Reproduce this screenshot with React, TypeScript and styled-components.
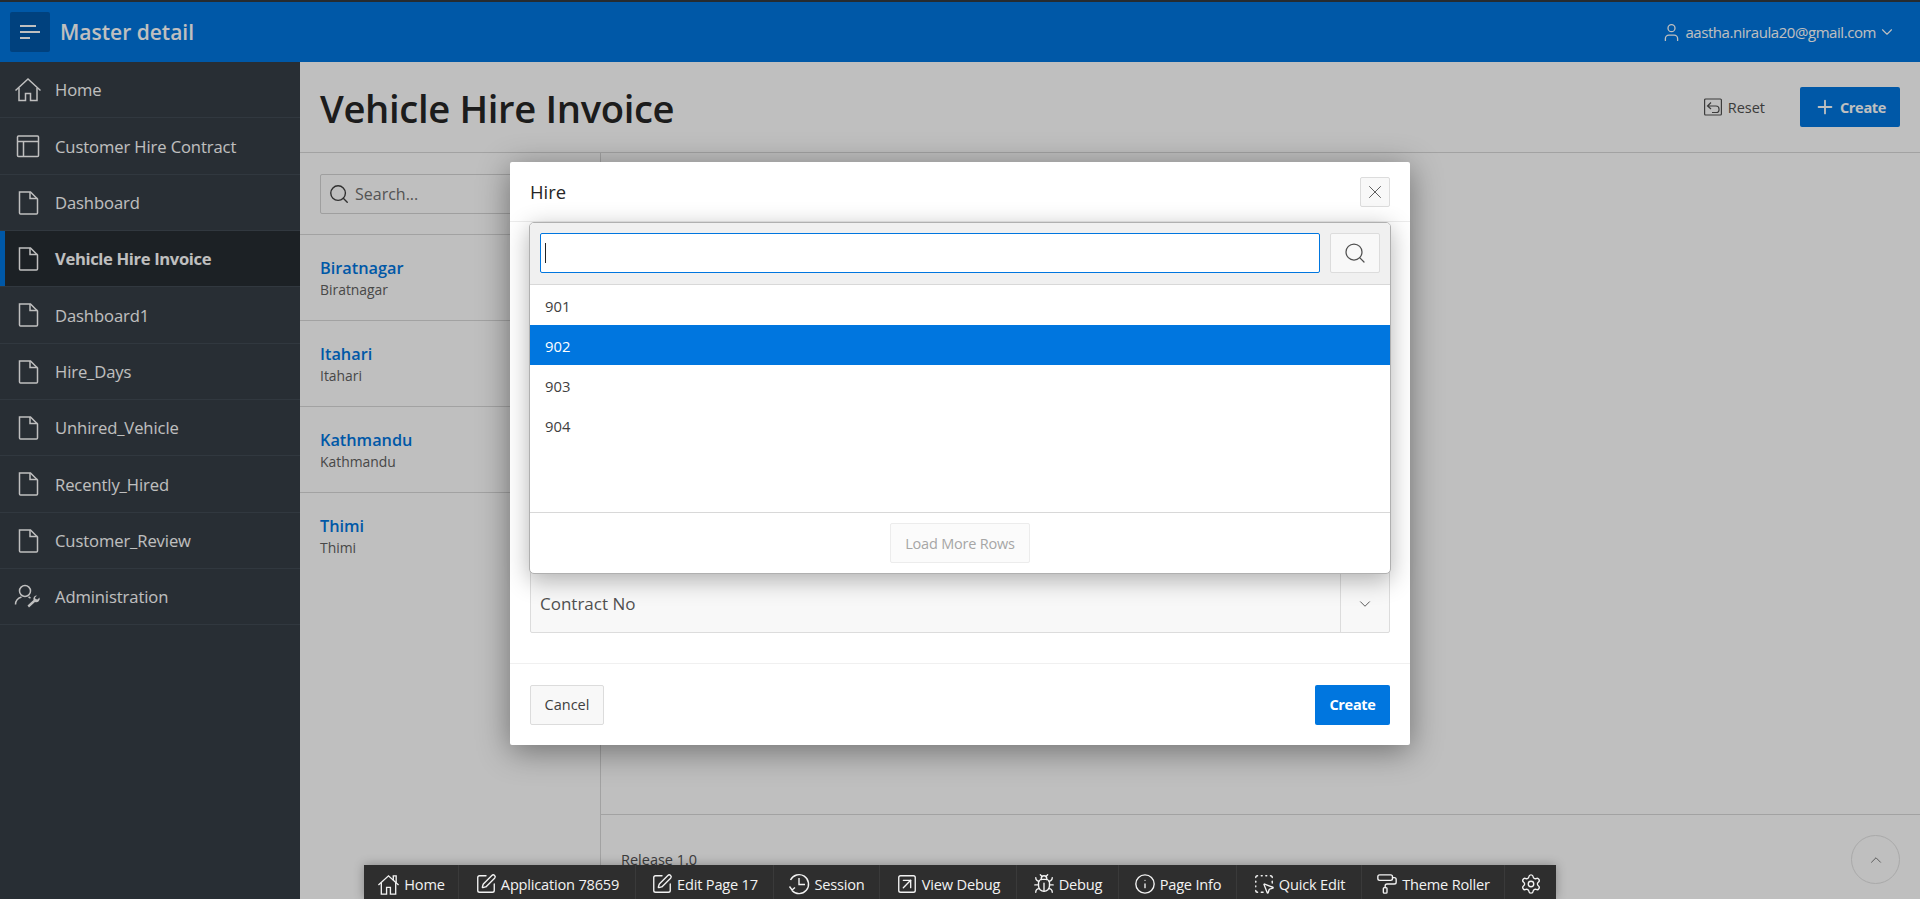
import React from 'react';
import styled, { createGlobalStyle } from 'styled-components';
import {
  ChevronDown,
  ChevronUp,
  Info,
  PaintRoller,
  Plus,
  Search,
  Settings,
  SquareArrowUpRight,
  SquareDashedMousePointer,
  SquarePen,
  User,
  Bug,
  X,
} from 'lucide-react';

const GlobalStyle = createGlobalStyle`
  html, body {
    margin: 0;
    height: 100%;
    background: #fff;
    font-family: "Open Sans", "Noto Sans", "Liberation Sans", sans-serif;
  }
  * { box-sizing: border-box; }
`;

const Page = styled.div`
  position: relative;
  height: 100vh;
  overflow: hidden;
  display: flex;
  flex-direction: column;
`;

const Header = styled.header`
  flex: 0 0 62px;
  display: flex;
  align-items: center;
  padding: 0 24px 0 10px;
  background: #0076df;
  border-top: 2px solid #333a40;
  color: #fff;
`;

const MenuButton = styled.div`
  width: 40px;
  height: 40px;
  display: flex;
  flex-direction: column;
  justify-content: center;
  gap: 4.3px;
  padding-left: 10px;
  background: #0057a9;
  border-radius: 2px;
`;

const MenuBar = styled.span<{ $w: number }>`
  display: block;
  height: 2px;
  width: ${(p) => p.$w}px;
  background: #fff;
`;

const Brand = styled.div`
  margin-left: 10px;
  font-size: 21px;
  font-weight: 600;
`;

const UserMenu = styled.div`
  margin-left: auto;
  display: flex;
  align-items: center;
  font-size: 15px;
  letter-spacing: -0.44px;
`;

const UserName = styled.span`
  margin: 0 2px 0 3px;
`;

const Body = styled.div`
  flex: 1;
  min-height: 0;
  display: flex;
`;

const Sidebar = styled.nav`
  flex: 0 0 300px;
  background: #363e46;
`;

const NavItem = styled.div<{ $active?: boolean }>`
  height: 56.33px;
  display: flex;
  align-items: center;
  padding: 0.5px 0 0 14px;
  gap: 13px;
  color: #fff;
  font-size: 16.6px;
  font-weight: ${(p) => (p.$active ? 700 : 400)};
  letter-spacing: ${(p) => (p.$active ? '-0.35px' : '-0.1px')};
  background: ${(p) => (p.$active ? '#262d32' : 'transparent')};
  border-bottom: 1px solid #424b54;
  box-shadow: ${(p) => (p.$active ? 'inset 5px 0 0 #0076df' : 'none')};
`;

const NavIconBox = styled.span`
  width: 28px;
  height: 28px;
  display: flex;
  align-items: center;
  justify-content: center;
`;

const Main = styled.main`
  flex: 1;
  min-width: 0;
  display: flex;
  flex-direction: column;
`;

const PageHead = styled.div`
  flex: 0 0 91px;
  display: flex;
  align-items: center;
  padding: 0 20px;
  border-bottom: 1px solid #d8d8d8;
`;

const PageTitle = styled.h1`
  margin: 2px 0 0;
  font-size: 38.2px;
  font-weight: 600;
  letter-spacing: -0.35px;
  color: #262626;
`;

const ResetButton = styled.div`
  margin-left: auto;
  display: flex;
  align-items: center;
  gap: 6px;
  color: #505050;
  font-size: 14.5px;
  margin-right: 35px;
`;

const PrimaryHeadButton = styled.div`
  width: 100px;
  height: 40px;
  display: flex;
  align-items: center;
  justify-content: center;
  gap: 4px;
  background: #0076df;
  color: #fff;
  border-radius: 2px;
  font-size: 14.5px;
  font-weight: 700;
  letter-spacing: -0.3px;
`;

const Split = styled.div`
  flex: 1;
  min-height: 0;
  display: flex;
`;

const MasterColumn = styled.aside`
  flex: 0 0 301px;
  border-right: 1px solid #d8d8d8;
`;

const SearchWrap = styled.div`
  height: 82px;
  padding: 21px 20px;
  border-bottom: 1px solid #d8d8d8;
`;

const SearchBox = styled.div`
  height: 40px;
  display: flex;
  align-items: center;
  gap: 5px;
  padding-left: 7px;
  border: 1px solid #d4d4d4;
  border-radius: 2px;
  color: #707070;
  font-size: 16px;
`;

const MasterItem = styled.div<{ $last?: boolean }>`
  height: 86px;
  padding: 23px 20px 0;
  border-bottom: ${(p) => (p.$last ? 'none' : '1px solid #d8d8d8')};
`;

const MasterTitle = styled.div`
  color: #0076df;
  font-size: 16.3px;
  font-weight: 600;
  line-height: 21px;
`;

const MasterSub = styled.div`
  color: #606060;
  font-size: 13.9px;
  line-height: 22px;
`;

const DetailColumn = styled.section`
  flex: 1;
  display: flex;
  flex-direction: column;
  justify-content: flex-end;
`;

const Footer = styled.footer`
  height: 85px;
  padding: 35px 20px 0;
  border-top: 1px solid #d8d8d8;
  color: #505050;
  font-size: 14.5px;
`;

const Overlay = styled.div`
  position: absolute;
  inset: 0;
  background: rgba(0, 0, 0, 0.25);
`;

const Dialog = styled.div`
  position: absolute;
  left: 510px;
  top: 162px;
  width: 900px;
  height: 583px;
  display: flex;
  flex-direction: column;
  background: #fff;
  border-radius: 2px;
  box-shadow: 0 6px 32px rgba(0, 0, 0, 0.42);
  color: #404040;
`;

const DialogHead = styled.div`
  flex: 0 0 60px;
  display: flex;
  align-items: center;
  justify-content: space-between;
  padding: 0 20px;
  border-bottom: 1px solid #ececec;
  font-size: 18.4px;
  font-weight: 500;
  color: #262626;
`;

const IconButton = styled.div<{ $w: number; $h: number }>`
  width: ${(p) => p.$w}px;
  height: ${(p) => p.$h}px;
  display: flex;
  align-items: center;
  justify-content: center;
  background: #f8f8f8;
  border: 1px solid #dcdcdc;
  border-radius: 2px;
  color: #505050;
`;

const DialogBody = styled.div`
  flex: 1;
  display: flex;
  flex-direction: column;
  justify-content: flex-end;
  padding: 0 20px 30px;
  border-bottom: 1px solid #f0f0f0;
`;

const SelectField = styled.div`
  height: 64px;
  display: flex;
  align-items: stretch;
  background: #f8f8f8;
  border: 1px solid #dcdcdc;
  border-radius: 2px;
`;

const SelectLabel = styled.div`
  flex: 1;
  display: flex;
  align-items: center;
  padding: 5px 0 0 9px;
  font-size: 17px;
  color: #505050;
`;

const SelectToggle = styled.div`
  width: 49px;
  display: flex;
  align-items: center;
  justify-content: center;
  padding-top: 5px;
  border-left: 1px solid #dcdcdc;
  color: #505050;
`;

const DialogFoot = styled.div`
  flex: 0 0 81px;
  display: flex;
  align-items: center;
  justify-content: space-between;
  padding: 0 20px;
`;

const CancelButton = styled.div`
  width: 74px;
  height: 40px;
  display: flex;
  align-items: center;
  justify-content: center;
  background: #f8f8f8;
  border: 1px solid #dcdcdc;
  border-radius: 2px;
  font-size: 14.5px;
  color: #404040;
`;

const CreateButton = styled.div`
  width: 75px;
  height: 40px;
  display: flex;
  align-items: center;
  justify-content: center;
  background: #0076df;
  border-radius: 2px;
  color: #fff;
  font-size: 14.5px;
  font-weight: 700;
  letter-spacing: -0.3px;
`;

const Popup = styled.div`
  position: absolute;
  left: 19px;
  top: 60px;
  width: 862px;
  height: 352px;
  display: flex;
  flex-direction: column;
  background: #fff;
  border-radius: 5px;
  border: 1px solid #b0b0b0;
  box-shadow: 0 6px 24px rgba(0, 0, 0, 0.3);
  overflow: hidden;
`;

const PopupSearch = styled.div`
  flex: 0 0 62px;
  display: flex;
  align-items: center;
  gap: 10px;
  padding: 0 10px 1px;
  background: #f0f0f0;
  border-bottom: 1px solid #d8d8d8;
`;

const PopupInput = styled.div`
  flex: 1;
  height: 40px;
  display: flex;
  align-items: center;
  padding-left: 4px;
  background: #fff;
  border: 1px solid #0076df;
  border-radius: 2px;
`;

const Caret = styled.span`
  width: 1px;
  height: 20px;
  background: #222;
`;

const Rows = styled.div`
  flex: 1;
`;

const Row = styled.div<{ $selected?: boolean }>`
  height: 40px;
  display: flex;
  align-items: center;
  padding: 1px 0 0 15px;
  font-size: 14.8px;
  background: ${(p) => (p.$selected ? '#0076df' : 'transparent')};
  color: ${(p) => (p.$selected ? '#fff' : '#404040')};
`;

const PopupFoot = styled.div`
  flex: 0 0 61px;
  display: flex;
  align-items: flex-start;
  justify-content: center;
  padding-top: 10px;
  border-top: 1px solid #d8d8d8;
`;

const LoadMore = styled.div`
  width: 140px;
  height: 40px;
  display: flex;
  align-items: center;
  justify-content: center;
  background: #fbfbfb;
  border: 1px solid #ececec;
  border-radius: 2px;
  font-size: 14.5px;
  letter-spacing: -0.2px;
  color: #a6a6a6;
`;

const ScrollTop = styled.div`
  position: absolute;
  left: 1851px;
  top: 835px;
  width: 49px;
  height: 49px;
  display: flex;
  align-items: center;
  justify-content: center;
  border: 1px solid #e2e2e2;
  border-radius: 50%;
  color: #505050;
`;

const DevBar = styled.div`
  position: absolute;
  left: 364px;
  bottom: 0;
  height: 34px;
  display: flex;
  background: #2e2e2e;
  box-shadow: 0 0 10px rgba(0, 0, 0, 0.3);
  color: #f2f2f2;
  font-size: 14.6px;
  letter-spacing: -0.2px;
`;

const DevItem = styled.div<{ $w: number }>`
  width: ${(p) => p.$w}px;
  display: flex;
  align-items: center;
  justify-content: center;
  gap: 4px;
  padding-top: 4px;
  border-right: 1px solid #3a3a3a;
  white-space: nowrap;

  &:last-child {
    border-right: none;
  }
`;

const HomeIcon = ({ size = 28 }: { size?: number }) => (
  <svg width={size} height={size} viewBox="0 0 28 28" fill="none" stroke="#fff" strokeWidth="1.5">
    <path d="M1.500 14.500 14 3l12.500 11.500" />
    <path d="M5 12v12.500h6.500v-7h5v7H23V12" />
  </svg>
);

const LayoutIcon = () => (
  <svg width="28" height="28" viewBox="0 0 28 28" fill="none" stroke="#fff" strokeWidth="1.5">
    <rect x="3.500" y="4" width="21" height="20.500" rx="1" />
    <path d="M3.500 9.500h21M9.500 9.500v15" />
  </svg>
);

const FileIcon = () => (
  <svg width="28" height="28" viewBox="0 0 28 28" fill="none" stroke="#fff" strokeWidth="1.5">
    <path d="M5.500 3h11L23.500 10v14a1 1 0 0 1-1 1h-16a1 1 0 0 1-1-1z" />
    <path d="M16 3v6.500h7.500" />
  </svg>
);

const AdminIcon = () => (
  <svg width="28" height="28" viewBox="0 0 28 28" fill="none" stroke="#fff" strokeWidth="1.5">
    <circle cx="11" cy="8" r="5.500" />
    <path d="M1.500 21.500c0-4 3-6.500 6-7.500M14.500 14l2 1" />
    <path
      d="M15 24.500l6-5.500a3.500 3.500 0 0 0 4.500-4.500l-2 2-2-.5-.5-1.500 2-2a3.500 3.500 0 0 0-3.500 4.500l-6 5.500z"
      fill="#fff"
      stroke="none"
    />
  </svg>
);

const ResetIcon = () => (
  <svg width="18" height="18" viewBox="0 0 18 18" fill="none" stroke="currentColor" strokeWidth="1.2">
    <rect x="0.600" y="1" width="16.800" height="16" rx="1" />
    <path d="M7 4.500 3.500 8 7 11M3.500 8H12a3 3 0 0 1 3 3v1a2.500 2.500 0 0 1-2.500 2.500H8" />
  </svg>
);

const ToolbarHome = () => (
  <svg width="23" height="23" viewBox="0 0 24 24" fill="none" stroke="currentColor" strokeWidth="1.400">
    <path d="M1.500 12.500 12 3l10.500 9.500" />
    <path d="M4.500 10v12H10v-7h4v7h5.500V10" />
    <path d="M17 7.500V3h3v7.200" />
  </svg>
);

const SessionIcon = () => (
  <svg width="22" height="22" viewBox="0 0 22 22" fill="none" stroke="currentColor" strokeWidth="1.4">
    <path d="M4 17.500A9.500 9.500 0 1 0 2.500 7" />
    <path d="M11 5v6.500h6M1.500 13.500 4 17l3-2.500" />
  </svg>
);

const navItems = [
  { label: 'Home', icon: <HomeIcon /> },
  { label: 'Customer Hire Contract', icon: <LayoutIcon /> },
  { label: 'Dashboard', icon: <FileIcon /> },
  { label: 'Vehicle Hire Invoice', icon: <FileIcon />, active: true },
  { label: 'Dashboard1', icon: <FileIcon /> },
  { label: 'Hire_Days', icon: <FileIcon /> },
  { label: 'Unhired_Vehicle', icon: <FileIcon /> },
  { label: 'Recently_Hired', icon: <FileIcon /> },
  { label: 'Customer_Review', icon: <FileIcon /> },
  { label: 'Administration', icon: <AdminIcon /> },
];

const cities = ['Biratnagar', 'Itahari', 'Kathmandu', 'Thimi'];

const devItems = [
  { label: 'Home', w: 95, icon: <ToolbarHome /> },
  { label: 'Application 78659', w: 177, icon: <SquarePen size={22} strokeWidth={1.5} /> },
  { label: 'Edit Page 17', w: 138, icon: <SquarePen size={22} strokeWidth={1.5} /> },
  { label: 'Session', w: 106, icon: <SessionIcon /> },
  { label: 'View Debug', w: 137, icon: <SquareArrowUpRight size={22} strokeWidth={1.5} /> },
  { label: 'Debug', w: 102, icon: <Bug size={22} strokeWidth={1.5} /> },
  { label: 'Page Info', w: 118, icon: <Info size={22} strokeWidth={1.5} /> },
  { label: 'Quick Edit', w: 125, icon: <SquareDashedMousePointer size={22} strokeWidth={1.5} /> },
  { label: 'Theme Roller', w: 143, icon: <PaintRoller size={22} strokeWidth={1.5} /> },
  { label: '', w: 51, icon: <Settings size={22} strokeWidth={1.5} /> },
];

const App: React.FC = () => {
  return (
    <>
      <GlobalStyle />
      <Page>
        <Header>
          <MenuButton>
            <MenuBar $w={16} />
            <MenuBar $w={20} />
            <MenuBar $w={10} />
          </MenuButton>
          <Brand>Master detail</Brand>
          <UserMenu>
            <User size={21} strokeWidth={1.5} />
            <UserName>aastha.niraula20@gmail.com</UserName>
            <ChevronDown size={18} strokeWidth={1.5} />
          </UserMenu>
        </Header>
        <Body>
          <Sidebar>
            {navItems.map((item) => (
              <NavItem key={item.label} $active={item.active}>
                <NavIconBox>{item.icon}</NavIconBox>
                {item.label}
              </NavItem>
            ))}
          </Sidebar>
          <Main>
            <PageHead>
              <PageTitle>Vehicle Hire Invoice</PageTitle>
              <ResetButton>
                <ResetIcon />
                Reset
              </ResetButton>
              <PrimaryHeadButton>
                <Plus size={22} strokeWidth={2} />
                Create
              </PrimaryHeadButton>
            </PageHead>
            <Split>
              <MasterColumn>
                <SearchWrap>
                  <SearchBox>
                    <Search size={22} strokeWidth={1.5} color="#404040" />
                    Search...
                  </SearchBox>
                </SearchWrap>
                {cities.map((city, i) => (
                  <MasterItem key={city} $last={i === cities.length - 1}>
                    <MasterTitle>{city}</MasterTitle>
                    <MasterSub>{city}</MasterSub>
                  </MasterItem>
                ))}
              </MasterColumn>
              <DetailColumn>
                <Footer>Release 1.0</Footer>
              </DetailColumn>
            </Split>
          </Main>
        </Body>
        <ScrollTop>
          <ChevronUp size={18} strokeWidth={1} />
        </ScrollTop>
        <Overlay />
        <Dialog>
          <DialogHead>
            Hire
            <IconButton $w={30} $h={30}>
              <X size={22} strokeWidth={1} />
            </IconButton>
          </DialogHead>
          <DialogBody>
            <SelectField>
              <SelectLabel>Contract No</SelectLabel>
              <SelectToggle>
                <ChevronDown size={18} strokeWidth={1.25} />
              </SelectToggle>
            </SelectField>
          </DialogBody>
          <DialogFoot>
            <CancelButton>Cancel</CancelButton>
            <CreateButton>Create</CreateButton>
          </DialogFoot>
          <Popup>
            <PopupSearch>
              <PopupInput>
                <Caret />
              </PopupInput>
              <IconButton $w={50} $h={40}>
                <Search size={24} strokeWidth={1.25} />
              </IconButton>
            </PopupSearch>
            <Rows>
              <Row>901</Row>
              <Row $selected>902</Row>
              <Row>903</Row>
              <Row>904</Row>
            </Rows>
            <PopupFoot>
              <LoadMore>Load More Rows</LoadMore>
            </PopupFoot>
          </Popup>
        </Dialog>
        <DevBar>
          {devItems.map((item) => (
            <DevItem key={item.w} $w={item.w}>
              {item.icon}
              {item.label}
            </DevItem>
          ))}
        </DevBar>
      </Page>
    </>
  );
};

export default App;
